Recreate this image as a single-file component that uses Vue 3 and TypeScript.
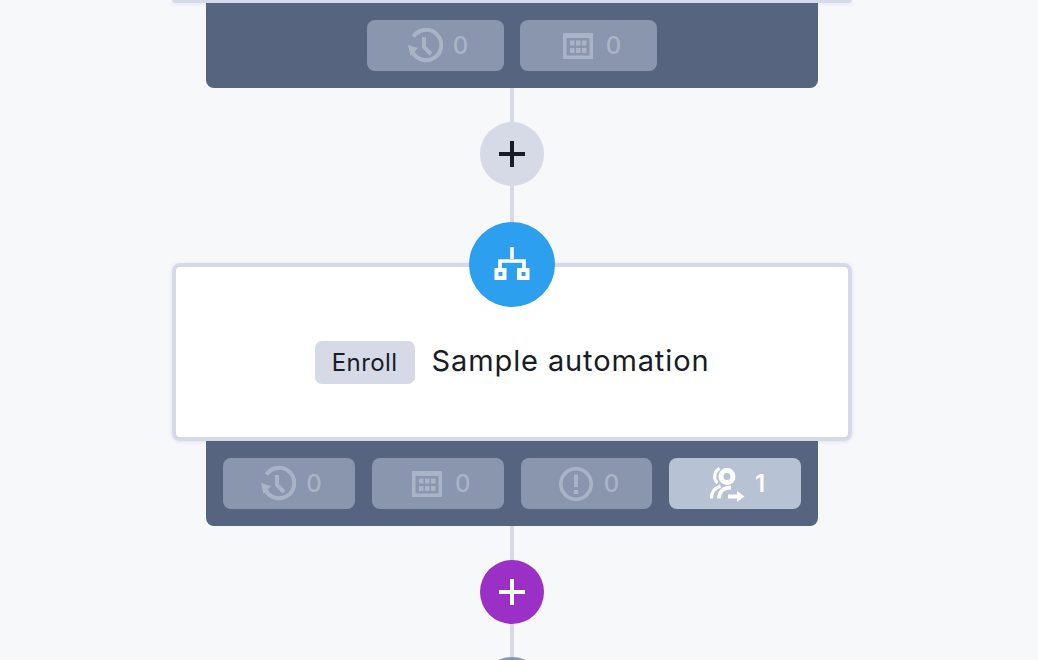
<script setup lang="ts">
interface Stat { icon: string; value: number; active?: boolean }
const topStats: Stat[] = [
  { icon: 'history', value: 0 },
  { icon: 'calendar', value: 0 },
]
const bottomStats: Stat[] = [
  { icon: 'history', value: 0 },
  { icon: 'calendar', value: 0 },
  { icon: 'alert', value: 0 },
  { icon: 'people', value: 1, active: true },
]
</script>

<template>
  <main class="flow">
    <div class="card-stub"></div>
    <div class="panel">
      <button v-for="(s, i) in topStats" :key="i" class="stat">
        <svg v-if="s.icon === 'history'" class="ico" viewBox="0 0 36 36" fill="none" stroke="currentColor">
          <path d="M4.9 22.5A15.2 15.2 0 1 0 6.5 8.5" stroke-width="4" />
          <path d="M1 17 L11 20 L3.5 28 Z" fill="currentColor" stroke="none" />
          <path d="M17 9V19L24 26" stroke-width="4" />
        </svg>
        <svg v-else class="ico" viewBox="0 0 36 36" fill="none">
          <path fill="currentColor" fill-rule="evenodd" d="M3 5H33V31H3ZM6.5 10V27.5H29.5V10Z" />
          <path fill="currentColor" d="M10 12.5h4.5v5h-4.5zM16 12.5h4.5v5h-4.5zM22 12.5h4.5v5h-4.5zM10 20h4.5v5h-4.5zM16 20h4.5v5h-4.5zM22 20h4.5v5h-4.5z" />
        </svg>
        <span>{{ s.value }}</span>
      </button>
    </div>

    <div class="line line-a"></div>
    <div class="add add-grey">
      <svg viewBox="0 0 28 28" class="plus"><path d="M14 1V27M1 14H27" stroke="currentColor" stroke-width="4" /></svg>
    </div>
    <div class="line line-b"></div>

    <div class="node">
      <svg viewBox="0 0 36 36" class="tree" fill="none">
        <path d="M18 0V12M6 24V14H30V24" stroke="#fff" stroke-width="3.6" />
        <path fill="#fff" fill-rule="evenodd" d="M0.5 21H12.5V33H0.5ZM4.5 25V29H8.5V25ZM23 21H35.5V33H23ZM27.5 25V29H31.5V25Z" />
      </svg>
    </div>
    <section class="card">
      <span class="tag">Enroll</span>
      <span class="title">Sample automation</span>
    </section>

    <div class="panel panel-wide">
      <button v-for="(s, i) in bottomStats" :key="i" class="stat" :class="{ active: s.active }">
        <svg v-if="s.icon === 'history'" class="ico" viewBox="0 0 36 36" fill="none" stroke="currentColor">
          <path d="M4.9 22.5A15.2 15.2 0 1 0 6.5 8.5" stroke-width="4" />
          <path d="M1 17 L11 20 L3.5 28 Z" fill="currentColor" stroke="none" />
          <path d="M17 9V19L24 26" stroke-width="4" />
        </svg>
        <svg v-else-if="s.icon === 'calendar'" class="ico" viewBox="0 0 36 36" fill="none">
          <path fill="currentColor" fill-rule="evenodd" d="M3 5H33V31H3ZM6.5 10V27.5H29.5V10Z" />
          <path fill="currentColor" d="M10 12.5h4.5v5h-4.5zM16 12.5h4.5v5h-4.5zM22 12.5h4.5v5h-4.5zM10 20h4.5v5h-4.5zM16 20h4.5v5h-4.5zM22 20h4.5v5h-4.5z" />
        </svg>
        <svg v-else-if="s.icon === 'alert'" class="ico" viewBox="0 0 36 36" fill="none" stroke="currentColor">
          <circle cx="18" cy="18" r="15.2" stroke-width="3.6" />
          <path d="M18 8.5V21" stroke-width="4" />
          <path d="M18 24V28" stroke-width="4.4" />
        </svg>
        <svg v-else class="ico" viewBox="0 0 36 36" fill="none" stroke="currentColor">
          <circle cx="18" cy="10.5" r="6" stroke-width="5" />
          <path d="M10.5 2.5A9 9 0 0 0 8.5 17" stroke-width="3.2" />
          <path d="M2.5 32.5C2.5 26 5.5 22 11.5 20" stroke-width="3.4" />
          <path d="M10 32.5C10 26 14 21.5 22 21.5" stroke-width="3.8" />
          <path d="M19 30.5H29" stroke-width="4" />
          <path d="M28 25L35.5 30.5L28 36Z" fill="currentColor" stroke="none" />
        </svg>
        <span>{{ s.value }}</span>
      </button>
    </div>

    <div class="line line-c"></div>
    <div class="add add-purple">
      <svg viewBox="0 0 28 28" class="plus"><path d="M14 1V27M1 14H27" stroke="currentColor" stroke-width="4" /></svg>
    </div>
    <div class="line line-d"></div>
    <div class="next"></div>
  </main>
</template>

<style>
html, body { margin: 0; background: #f7f8fa; }
</style>

<style scoped>
.flow {
  width: 1024px;
  height: 660px;
  overflow: hidden;
  display: flex;
  flex-direction: column;
  align-items: center;
  background: #f7f8fa;
  font-family: "Inter", "Liberation Sans", sans-serif;
}
.card-stub {
  width: 680px;
  height: 3px;
  flex: none;
  background: #d5daea;
  border-radius: 0 0 6px 6px;
  box-shadow: 0 1px 4px rgba(90, 100, 130, 0.14);
}
.panel {
  flex: none;
  width: 612px;
  height: 85px;
  box-sizing: border-box;
  padding: 17px;
  display: flex;
  justify-content: center;
  gap: 16px;
  background: #56647f;
  border-radius: 0 0 8px 8px;
}
.panel-wide { gap: 17px; }
.stat {
  flex: none;
  width: 137px;
  height: 51px;
  box-sizing: border-box;
  display: flex;
  align-items: center;
  justify-content: center;
  gap: 10px;
  padding: 0 0 0 4px;
  border: 0;
  border-radius: 8px;
  background: #8996ad;
  color: #abb4c6;
  font: 500 24px "Inter", "Liberation Sans", sans-serif;
}
.panel-wide .stat { flex: 1 1 0; width: auto; }
.stat.active { background: #b8c2d5; color: #fff; font-weight: 600; }
.ico { width: 36px; height: 36px; flex: none; }
.line { flex: none; width: 4px; background: #d5dae6; }
.line-a { height: 34px; }
.line-b { height: 36px; }
.line-c { height: 34px; }
.line-d { height: 33px; }
.add {
  flex: none;
  width: 64px;
  height: 64px;
  border-radius: 50%;
  display: flex;
  align-items: center;
  justify-content: center;
}
.add-grey { background: #d5dae6; color: #171c28; }
.add-purple { background: #9b30c6; color: #fff; }
.plus { width: 28px; height: 28px; }
.node {
  flex: none;
  z-index: 1;
  width: 86px;
  height: 85px;
  border-radius: 50%;
  background: #2c9fee;
  display: flex;
  align-items: center;
  justify-content: center;
}
.tree { width: 36px; height: 36px; }
.card {
  flex: none;
  margin-top: -44px;
  width: 680px;
  height: 178px;
  box-sizing: border-box;
  padding-top: 21px;
  display: flex;
  align-items: center;
  justify-content: center;
  gap: 17px;
  background: #fff;
  border: 4px solid #d5dae6;
  border-radius: 8px;
  box-shadow: 0 1px 4px rgba(90, 100, 130, 0.14);
}
.tag {
  width: 100px;
  height: 43px;
  display: flex;
  align-items: center;
  justify-content: center;
  background: #d5dae6;
  border-radius: 7px;
  color: #171c28;
  font-size: 24px;
  letter-spacing: 0.4px;
}
.title {
  padding-bottom: 4px;
  color: #171c28;
  font-size: 29px;
  letter-spacing: 0.88px;
}
.next {
  flex: none;
  width: 64px;
  height: 64px;
  border-radius: 50%;
  background: #8996ad;
}
</style>
